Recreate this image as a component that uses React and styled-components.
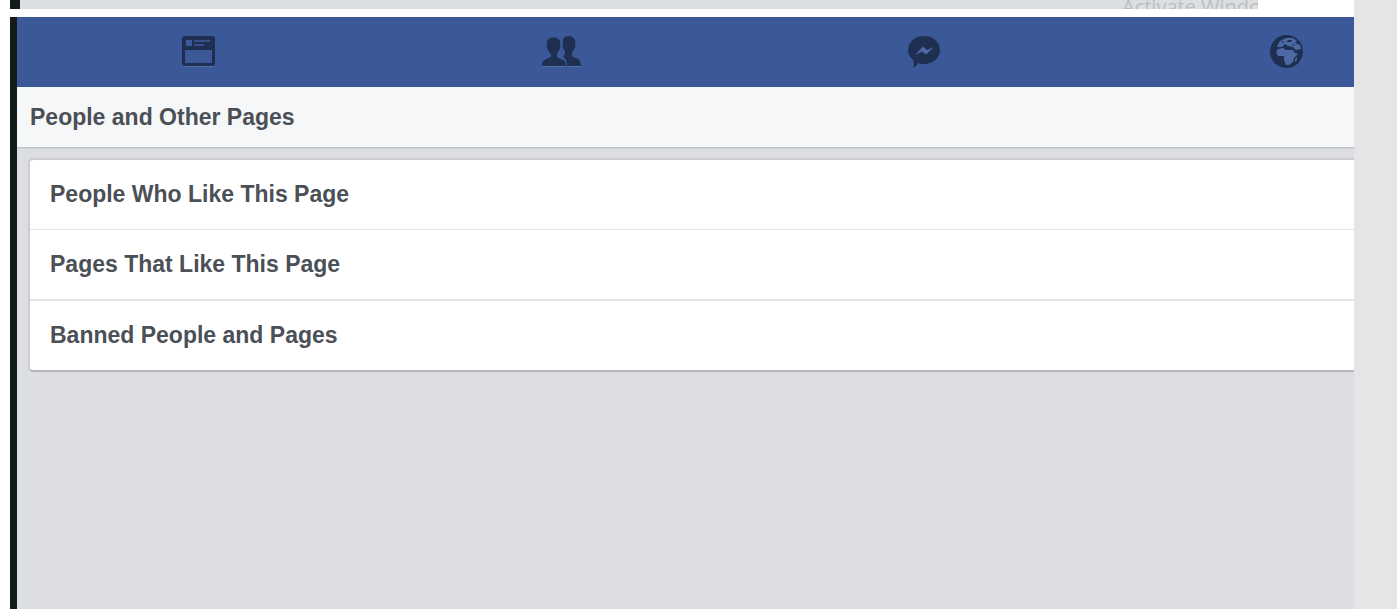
import React from "react";
import styled, { createGlobalStyle } from "styled-components";

const GlobalStyle = createGlobalStyle`
  * { box-sizing: border-box; }
  body { margin: 0; background: #fff; font-family: "Liberation Sans", Arial, sans-serif; }
`;

const Page = styled.div`
  display: flex;
  min-height: 100vh;
  border-right: 43px solid #e5e5e5;
  padding-left: 10px;
`;

const Content = styled.div`
  flex: 1;
  min-width: 0;
  display: flex;
  flex-direction: column;
  gap: 8px;
`;

const PreviousScreen = styled.div`
  display: flex;
  justify-content: flex-end;
  height: 9px;
  margin-right: 96px;
  overflow: hidden;
  border-left: 10px solid #151a1b;
  background: #dcdfe2;
`;

const Watermark = styled.span`
  width: 136px;
  overflow: hidden;
  white-space: nowrap;
  font: 20px/20px "Open Sans", "Noto Sans", sans-serif;
  margin-top: -3px;
  height: 20px;
  color: #bcbec1;
`;

const Screen = styled.main`
  flex: 1;
  border-left: 7px solid #151a1b;
  background: #dddee2;
`;

const TopBar = styled.nav`
  display: flex;
  align-items: center;
  justify-content: space-between;
  height: 70px;
  padding: 0 48px 0 161px;
  background: #3b5998;
`;

const TabButton = styled.button`
  display: flex;
  width: 40px;
  height: 40px;
  padding: 0;
  border: 0;
  background: none;
  color: #1f2f52;
  cursor: pointer;
`;

const Heading = styled.h1`
  margin: 0;
  padding: 0 13px;
  font-size: 23px;
  line-height: 60px;
  color: #4b4f56;
  background: #f5f7f9;
  border-bottom: 1px solid #bfc2c8;
  box-shadow: 0 1px 0 #d0d2d7;
`;

const Card = styled.ul`
  list-style: none;
  margin: 10px 0 0 11px;
  padding: 0;
  overflow: hidden;
  background: #fff;
  border: 2px solid #caccd1;
  border-right: 0;
  border-bottom-color: #b4b6bc;
  border-radius: 5px 0 0 5px;
`;

const Row = styled.li`
  border-bottom: ${(p) => p.$divider}px solid #e4e5e8;
`;

const RowLink = styled.a`
  display: block;
  padding: 0 20px;
  font-size: 23px;
  font-weight: bold;
  line-height: 69px;
  color: #4b4f56;
  text-decoration: none;
`;

const Icon = ({ children }) => (
  <svg width="40" height="40" viewBox="0 0 40 40" fill="currentColor" aria-hidden="true">
    {children}
  </svg>
);

const FeedIcon = () => (
  <Icon>
    <path fillRule="evenodd" d="M7 4H34Q37 4 37 7V31Q37 34 34 34H7Q4 34 4 31V7Q4 4 7 4ZM7 18V30Q7 31 8 31H33Q34 31 34 30V18Z" />
    <path fill="#3b5998" d="M8 8h6v6H8z" />
    <path fill="#3b5998" d="M16 8h16v2H16zM16 12h10v2H16z" opacity=".8" />
    <path stroke="#5873aa" strokeWidth="1" d="M6 34.500H35" />
  </Icon>
);

const FriendsIcon = () => (
  <Icon>
    <path d="M22 12C21 7 23 4 28 4C33 4 35 8 34 12C35 14 34 16 33 17C32 19 31 20 31 22V24C33 26 38 26 39 29Q40 31 40 34H26C26 29 25 27 22 25C24 23 24 21 24 19C22 17 21 14 22 12Z" />
    <path d="M12.500 5.500C17 5.500 20 8 19 13C20 15 19 17 18 18C17 20 16 21 16 22V25C18 27 23 27 24 30Q25 32 25 34H1Q1 31 2 29C4 27 8 26 10 25V22C9 21 8 20 7 18C6 17 5 15 6 13C5 8 8 5.500 12.500 5.500Z" />
    <path fill="none" stroke="#5873aa" strokeWidth="1" d="M1 34.500H25M27 34.500H40" />
  </Icon>
);

const MessengerIcon = () => (
  <Icon>
    <path d="M21 4C30 4 37 10 37 18C37 26 30 32 21 32C19 32 17 32 15 31C14 33 12 35 10 36C11 33 11 30 10 28C7 25 5 22 5 18C5 10 12 4 21 4Z" />
    <path fill="#4c69a3" d="M12 23L20 14.500L24 18L31 15L23 22.500L19 19.500Z" />
  </Icon>
);

const GlobeIcon = () => (
  <Icon>
    <circle cx="20.500" cy="19.500" r="16.500" />
    <g fill="#4c69a3">
      <path d="M10 20L12 17L17 16L20 18H27L29 21L32 22L28 26L27 30L23 33H20L18 28V24L12 24Z" />
      <path d="M11 14L14 9L20 6H27L31 9L29 11L34 13L35 17L30 18L27 15L22 14L19 12L16 15H12Z" />
      <path d="M29 27L31 25V28L29 30Z" />
    </g>
    <path d="M15 10L18 9L17 11ZM22 8L26 8L25 10L21 10ZM25 12L29 13L28 14Z" />
  </Icon>
);

const tabs = [
  { label: "News Feed", Glyph: FeedIcon },
  { label: "Friend Requests", Glyph: FriendsIcon },
  { label: "Messages", Glyph: MessengerIcon },
  { label: "Notifications", Glyph: GlobeIcon },
];

const rows = [
  { text: "People Who Like This Page", divider: 1 },
  { text: "Pages That Like This Page", divider: 2 },
  { text: "Banned People and Pages", divider: 0 },
];

export default function App() {
  return (
    <>
      <GlobalStyle />
      <Page>
        <Content>
          <PreviousScreen>
            <Watermark>Activate Windows</Watermark>
          </PreviousScreen>
          <Screen>
            <TopBar>
              {tabs.map(({ label, Glyph }) => (
                <TabButton key={label} type="button" aria-label={label}>
                  <Glyph />
                </TabButton>
              ))}
            </TopBar>
            <Heading>People and Other Pages</Heading>
            <Card>
              {rows.map(({ text, divider }) => (
                <Row key={text} $divider={divider}>
                  <RowLink href="#">{text}</RowLink>
                </Row>
              ))}
            </Card>
          </Screen>
        </Content>
      </Page>
    </>
  );
}
